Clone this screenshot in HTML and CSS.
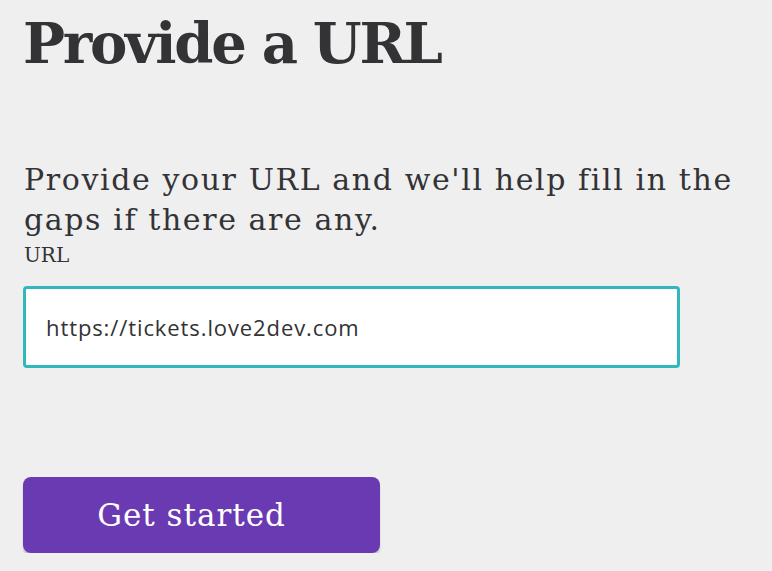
FILE: index.html
```html
<!DOCTYPE html>
<html lang="en">
<head>
<meta charset="utf-8">
<title>Provide a URL</title>
<link rel="stylesheet" href="styles.css">
</head>
<body>
<main class="page">
  <h1 class="title">Provide a URL</h1>
  <p class="lead">Provide your URL and we'll help fill in the gaps if there are any.</p>
  <label class="label" for="url">URL</label>
  <input class="url-input" id="url" type="text" value="https://tickets.love2dev.com">
  <button class="btn" type="button">Get started</button>
</main>
</body>
</html>
```

FILE: styles.css
```css
html, body {
  margin: 0;
  padding: 0;
  background: #efefef;
}
.page {
  display: flex;
  flex-direction: column;
  align-items: flex-start;
  padding: 9px 23px 0;
  color: #333336;
  font-family: "DejaVu Serif", serif;
}
.title {
  margin: 0;
  font-size: 56px;
  font-weight: bold;
  line-height: 68px;
  letter-spacing: -2.3px;
}
.lead {
  margin: 83px 0 0 1px;
  font-size: 30px;
  line-height: 40px;
  width: 745px;
  letter-spacing: 1.6px;
}
.label {
  margin: 0 0 0 1px;
  font-size: 20px;
  line-height: 30px;
}
.url-input {
  box-sizing: border-box;
  margin-top: 16px;
  width: 657px;
  height: 82px;
  border: 3px solid #33b7be;
  border-radius: 4px;
  background: #fff;
  padding: 0 20px;
  font-family: "Open Sans", sans-serif;
  font-size: 22px;
  letter-spacing: 0.9px;
  color: #333;
  outline: none;
}
.btn {
  margin-top: 109px;
  width: 357px;
  height: 76px;
  padding: 0 20px 0 0;
  border: none;
  border-radius: 8px;
  background: #6a3ab2;
  color: #fff;
  font-family: "DejaVu Serif", serif;
  font-size: 31px;
  letter-spacing: 1px;
  box-shadow: 0 3px 2px rgba(0,0,0,0.18);
  cursor: pointer;
}
```
